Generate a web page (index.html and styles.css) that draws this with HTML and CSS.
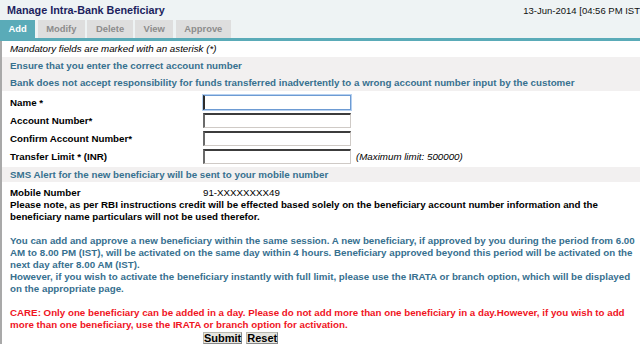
FILE: index.html
```html
<!DOCTYPE html>
<html>
<head>
<meta charset="utf-8">
<link rel="stylesheet" href="styles.css">
</head>
<body>
<div class="header">
  <span class="title">Manage Intra-Bank Beneficiary</span>
  <span class="date">13-Jun-2014 [04:56 PM IST</span>
</div>
<div class="tabs">
  <span class="tab active">Add</span>
  <span class="tab">Modify</span>
  <span class="tab">Delete</span>
  <span class="tab">View</span>
  <span class="tab">Approve</span>
</div>
<div class="content">
  <div class="note">Mandatory fields are marked with an asterisk (*)</div>
  <div class="info">
    <div class="info-row">Ensure that you enter the correct account number</div>
    <div class="info-row">Bank does not accept responsibility for funds transferred inadvertently to a wrong account number input by the customer</div>
  </div>
  <div class="form">
    <label class="label">Name *</label>
    <div class="field"><input class="input focused" type="text"></div>
    <label class="label">Account Number*</label>
    <div class="field"><input class="input" type="text"></div>
    <label class="label">Confirm Account Number*</label>
    <div class="field"><input class="input" type="text"></div>
    <label class="label">Transfer Limit * (INR)</label>
    <div class="field"><input class="input" type="text"><span class="hint">(Maximum limit: 500000)</span></div>
  </div>
  <div class="info sms">
    <div class="info-row">SMS Alert for the new beneficiary will be sent to your mobile number</div>
  </div>
  <div class="mobile">
    <span class="label">Mobile Number</span>
    <span class="value">91-XXXXXXXX49</span>
  </div>
  <p class="para black">Please note, as per RBI instructions credit will be effected based solely on the beneficiary account number information and the beneficiary name particulars will not be used therefor.</p>
  <p class="para blue">You can add and approve a new beneficiary within the same session. A new beneficiary, if approved by you during the period from 6.00 AM to 8.00 PM (IST), will be activated on the same day within 4 hours. Beneficiary approved beyond this period will be activated on the next day after 8.00 AM (IST).<br>However, if you wish to activate the beneficiary instantly with full limit, please use the IRATA or branch option, which will be displayed on the appropriate page.</p>
  <p class="para red">CARE: Only one beneficiary can be added in a day. Please do not add more than one beneficiary in a day.However, if you wish to add more than one beneficiary, use the IRATA or branch option for activation.</p>
  <div class="actions">
    <button class="btn" type="button">Submit</button>
    <button class="btn" type="button">Reset</button>
  </div>
</div>
</body>
</html>
```
FILE: styles.css
```css
html, body {
  margin: 0;
  padding: 0;
  background: #ffffff;
  overflow: hidden;
}
body {
  font-family: "Liberation Sans", Arial, sans-serif;
  font-size: 9.75px;
  color: #000;
}
.header {
  display: flex;
  justify-content: space-between;
  align-items: center;
  height: 20px;
  padding-left: 7px;
  background: #eef3f4;
}
.title {
  font-weight: bold;
  font-size: 10.8px;
  color: #1c1f5e;
}
.date {
  font-size: 9.5px;
  color: #111;
  white-space: nowrap;
}
.tabs {
  display: flex;
  gap: 2.5px;
  height: 18px;
  background: #eef3f4;
  border-bottom: 3px solid #5aabb8;
}
.tab {
  padding: 0 8.5px;
  line-height: 18px;
  font-weight: bold;
  font-size: 9.4px;
  background: #dedede;
  color: #8c8c8c;
}
.tab.active {
  background: #5aabb8;
  color: #ffffff;
}
.content {
  border-left: 2px solid #a9a9a9;
}
.note {
  font-style: italic;
  line-height: 16px;
  padding-left: 8px;
}
.info {
  background: #f2f0f0;
  color: #37708f;
  font-weight: bold;
  padding-left: 8px;
}
.info-row {
  line-height: 17px;
  white-space: nowrap;
}
.form {
  display: grid;
  grid-template-columns: 193px 1fr;
  grid-auto-rows: 18px;
  padding: 2px 0 2px 8px;
  align-items: center;
}
.label {
  font-weight: bold;
}
.field {
  display: flex;
  align-items: center;
}
.input {
  box-sizing: border-box;
  width: 148px;
  height: 15px;
  margin: 0;
  padding: 0;
  border: 1px solid #cfcac6;
  border-top: 2px solid #3c3c3c;
  border-left: 2px solid #6a6a6a;
  background: #fff;
}
.input.focused {
  border: 1px solid #6d9bd3;
  border-left: 2px solid #2c2c2c;
  box-shadow: 0 0 0 1px #b5d0f0;
}
.hint {
  font-style: italic;
  margin-left: 5px;
}
.sms .info-row {
  line-height: 15px;
}
.mobile {
  display: grid;
  grid-template-columns: 193px 1fr;
  padding: 4px 0 0 8px;
  line-height: 13px;
}
.para {
  margin: 0 0 12px 0;
  padding: 0 0 0 8px;
  line-height: 12px;
  font-weight: bold;
}
.para.black {
  color: #000;
}
.para.blue {
  color: #37708f;
}
.para.red {
  color: #f0141e;
  margin-bottom: 1px;
}
.actions {
  display: flex;
  gap: 4px;
  padding-left: 201px;
}
.btn {
  font-family: "Liberation Sans", Arial, sans-serif;
  font-size: 11px;
  font-weight: bold;
  color: #000;
  background: #e6e6e0;
  border: 1px solid #b8b8b0;
  border-right-color: #888;
  border-bottom-color: #888;
  padding: 0;
  height: 12px;
  line-height: 10px;
  margin: 0;
}
```
